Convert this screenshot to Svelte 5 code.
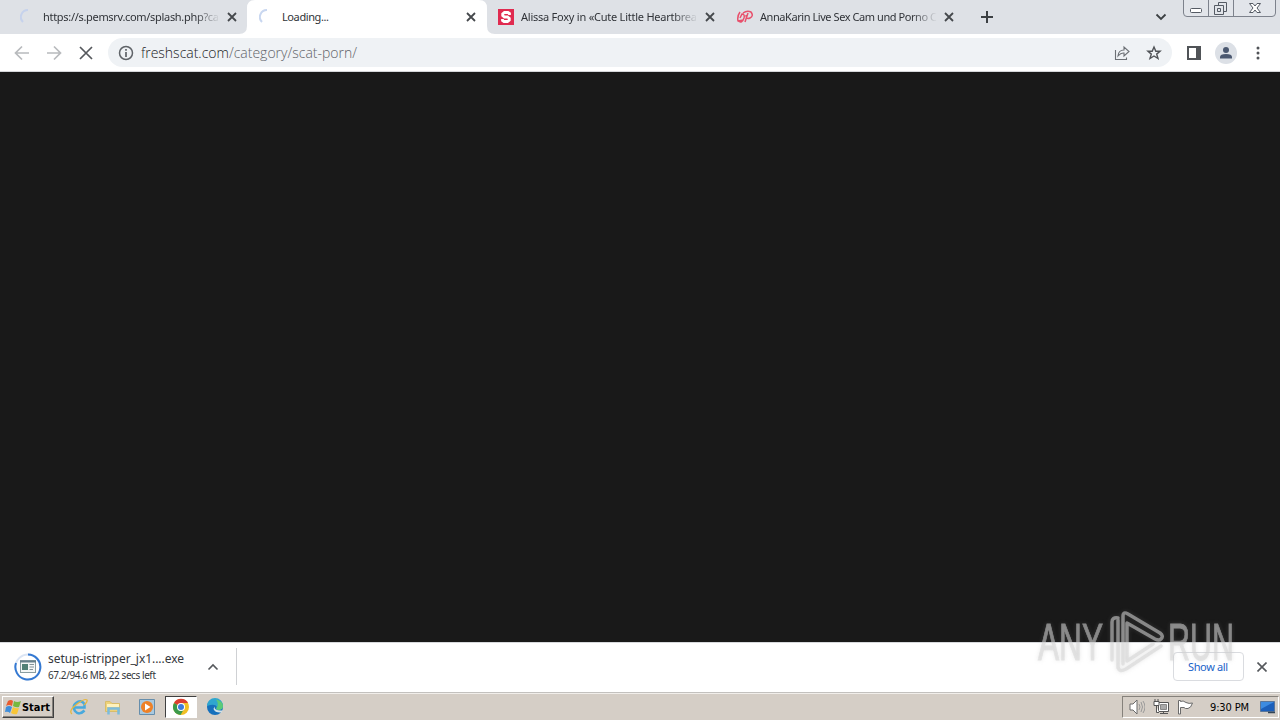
<script>
	const tabs = [
		{ title: "https://s.pemsrv.com/splash.php?ca", width: 176, icon: "spinner" },
		{ title: "Loading...", width: 47, icon: "spinner", active: true },
		{ title: "Alissa Foxy in «Cute Little Heartbrea", width: 176, icon: "strip" },
		{ title: "AnnaKarin Live Sex Cam und Porno C", width: 177, icon: "cam" },
	]
</script>

<div class="screen">
	<div class="tabstrip">
		{#each tabs as tab}
			<div class="tab" class:active={tab.active} class:divided={tab.icon == "strip" || tab.icon == "cam"}>
				{#if tab.active}
					<svg class="curves" width="256" height="34"><path d="M0 34Q8 34 8 26V8Q8 0 16 0H240Q248 0 248 8V26Q248 34 256 34Z" fill="#fff" /></svg>
				{/if}
				<svg class="favicon" width="16" height="16" viewBox="0 0 16 16">
					{#if tab.icon == "spinner"}
						<path d="M8 1A7 7 0 0 0 3 13" fill="none" stroke={tab.active ? "#c9d7f0" : "#c6d2ec"} stroke-width="2" />
					{:else if tab.icon == "strip"}
						<rect width="16" height="16" fill="#e02b50" />
						<path d="M11.500 6V4.500L10 3.500H6.500L4.700 5V6.500L6.500 8H9.500L11.300 9.500V11L9.500 12.500H6L4.500 11.500V10" fill="none" stroke="#fff" stroke-width="2.800" />
					{:else}
						<path d="M3 3Q0 7 1 12Q5 15 7 9Q8 5 5 5L3 9M6 4Q10 1 14 3Q17 7 13 9Q9 11 9 6M11 4L8 13M1 12L6 11" fill="none" stroke="#e8506c" stroke-width="1.500" />
					{/if}
				</svg>
				<svg class="title" width="178" height="20">
					<text x="0" y="14" textLength={tab.width}>{tab.title}</text>
				</svg>
				<svg class="close" width="10" height="10" viewBox="0 0 10 10"><path d="M1 1L9 9M9 1L1 9" fill="none" stroke="#45484c" stroke-width="1.800" /></svg>
			</div>
		{/each}
		<svg class="plus" width="12" height="12"><path d="M6 0V12M0 6H12" stroke="#3c4043" stroke-width="2" /></svg>
		<svg class="search" width="12" height="8"><path d="M1.500 1.500L6 6L10.500 1.500" fill="none" stroke="#3c4043" stroke-width="1.800" /></svg>
		<svg class="window" width="94" height="18" viewBox="0 0 94 18">
			<path d="M.5 0V13Q.5 16.500 4 16.500H89Q92.500 16.500 92.500 13V0M25.500 0V16M50.500 0V16" fill="#e2e5ea" stroke="#7d828c" />
			<g fill="none" stroke="#555b64">
				<rect x="7.500" y="8.500" width="11" height="4" rx="1" fill="#fff" />
				<path d="M35.500 5V2.500H43.500V11.500H40.500M31.500 5.500H40.500V14.500H31.500ZM34.500 8.500H37.500V11.500H34.500Z" />
				<path d="M66.500 3.500H70L72 6L74 3.500H77.500L74 8L77.500 12.500H74L72 10L70 12.500H66.500L70 8Z" fill="#fff" />
			</g>
		</svg>
	</div>

	<div class="toolbar">
		<svg class="nav" width="96" height="20" viewBox="0 0 96 20" fill="none" stroke="#b8babd" stroke-width="1.700">
			<path d="M15 10H2M8 3.500L1.500 10L8 16.500M33 10H46M40 3.500L46.500 10L40 16.500" />
			<path d="M66 4L78 16M78 4L66 16" stroke="#55585c" />
		</svg>
		<div class="address">
			<svg width="16" height="16" viewBox="0 0 16 16"><circle cx="8" cy="8" r="6.500" fill="none" stroke="#5f6368" stroke-width="1.500" /><path d="M8 7V12M8 4V5.700" stroke="#5f6368" stroke-width="1.700" /></svg>
			<svg class="url" width="230" height="24"><text x="0" y="17" textLength="216"><tspan fill="#202124">freshscat.com</tspan>/category/scat-porn/</text></svg>
			<svg class="share" width="16" height="16" viewBox="0 0 16 16"><path d="M1.500 5V14.500H12.500V12.500M4 11Q4.500 5 10 5V2L15 6.500L10 11V8Q7 7.500 4 11Z" fill="none" stroke="#6c7075" stroke-width="1.100" /></svg>
			<svg class="star" width="16" height="16" viewBox="0 0 16 16"><path d="M8 2L9.800 6.300H14L10.700 9.100L12 13.500L8 11L4 13.500L5.300 9.100L2 6.300H6.200Z" fill="none" stroke="#505357" stroke-width="1.400" /></svg>
		</div>
		<svg class="panel" width="14" height="14"><path d="M1 1H13V13H1Z" fill="none" stroke="#505357" stroke-width="2" /><path d="M9 1H14V13H9Z" fill="#505357" /></svg>
		<svg class="profile" width="22" height="22"><circle cx="11" cy="11" r="11" fill="#dce0e6" /><circle cx="11" cy="8" r="3" fill="#4b5870" /><path d="M5 16.500V15Q5 12 11 12Q17 12 17 15V16.500Z" fill="#4b5870" /></svg>
		<svg class="more" width="4" height="14" fill="#505357"><circle cx="2" cy="2" r="1.500" /><circle cx="2" cy="7" r="1.500" /><circle cx="2" cy="12" r="1.500" /></svg>
	</div>

	<div class="page"></div>

	<div class="shelf">
		<div class="download">
			<svg width="28" height="28" viewBox="0 0 28 28">
				<circle cx="14" cy="14" r="12.500" fill="none" stroke="#dbe5f4" stroke-width="2" />
				<path d="M14 1.500A12.500 12.500 0 1 1 2 10" fill="none" stroke="#3479d2" stroke-width="2" />
				<rect x="6.500" y="7.500" width="15" height="12" fill="#f4f7f6" stroke="#8a9ea2" />
				<path d="M6 8.500H22" stroke="#66808a" stroke-width="2" />
				<path d="M8 11H14V17H8Z" fill="#518176" />
				<path d="M15.500 11.500H20M15.500 14H20M15.500 16.500H19" stroke="#849499" />
			</svg>
			<svg class="file" width="150" height="36">
				<text x="0" y="14" textLength="136" class="name">setup-istripper_jx1....exe</text>
				<text x="0" y="30" textLength="108" class="left">67.2/94.6 MB, 22 secs left</text>
			</svg>
			<svg class="caret" width="12" height="8"><path d="M1.500 6.500L6 2L10.500 6.500" fill="none" stroke="#55585c" stroke-width="1.600" /></svg>
		</div>
		<button><svg width="40" height="16"><text x="0" y="12" textLength="40">Show all</text></svg></button>
		<svg class="dismiss" width="10" height="10"><path d="M.5 .5L9.500 9.500M9.500 .5L.5 9.500" stroke="#55585c" stroke-width="1.600" /></svg>
	</div>

	<div class="taskbar">
		<div class="start">
			<svg width="16" height="16" viewBox="0 0 16 16"><path d="M3 2Q6 0 8 2L7 7Q4 5 1 7Z" fill="#e95c2f" /><path d="M9 2Q12 4 16 2L14 8Q11 9 8 7Z" fill="#76b83f" /><path d="M1 8Q4 6 7 8L5 14Q3 12 0 13Z" fill="#3f8edb" /><path d="M8 8Q11 10 14 9L12 15Q9 16 6 14Z" fill="#f8c638" /></svg>
			<svg width="31" height="16"><text x="0" y="12" textLength="28" lengthAdjust="spacingAndGlyphs">Start</text></svg>
		</div>
		<div class="pins">
			<svg width="18" height="18" viewBox="0 0 18 18"><path d="M14.500 12.500Q9 18 5 13Q2 8 6 5Q11 1 14.500 6V9.500H5" fill="none" stroke="#48a9dd" stroke-width="2.500" /><path d="M2 16Q-2 13 7 6Q15 0 17 2Q18 4 14 7" fill="none" stroke="#e6b73f" stroke-width="1.300" /></svg>
			<svg width="18" height="18" viewBox="0 0 18 18"><path d="M1.500 3.500H6L8 5.500H15.500V13.500H1.500Z" fill="#eed27a" stroke="#d9bd6a" /><path d="M3 6H15V9H3Z" fill="#fff2bc" /><path d="M4.500 16.500V10.500H14.500V16.500" fill="none" stroke="#7cbcdd" stroke-width="2.500" /></svg>
			<svg width="18" height="18" viewBox="0 0 18 18"><path d="M1.500 1.500H16.500V16.500H1.500Z" fill="#a9c9df" stroke="#668eac" /><circle cx="9" cy="9" r="6" fill="#ee8127" /><path d="M7 5.500L12.500 9L7 12.500Z" fill="#fff" /></svg>
			<div class="current">
				<svg width="18" height="18" viewBox="0 0 18 18"><circle cx="9" cy="9" r="8" fill="#f1bf24" /><path d="M9 9L2 5A8 8 0 0 1 16 5H9Z" fill="#dc3e31" /><path d="M9 9L2 5A8 8 0 0 0 8.500 17L12 11Z" fill="#3c9a4b" /><circle cx="9" cy="9" r="4" fill="#fff" /><circle cx="9" cy="9" r="3" fill="#3d7bdc" /></svg>
			</div>
			<svg width="18" height="18" viewBox="0 0 18 18"><circle cx="9" cy="9" r="8" fill="#1670bc" /><path d="M1 8A8 8 0 0 1 17 8Q17 12 12 12Q9 11 11 9Q9 5 1 8Z" fill="#2fa6cf" /><path d="M10 1.500Q17 3 17 8Q17 12 12 12Q9 11 11 9Q13 6 10 1.500Z" fill="#5bca78" /><path d="M8.500 8.500Q8 13 16.500 12.500L15.500 14.500Q9 15 7.500 11Z" fill="#d5e4e8" /></svg>
		</div>
		<div class="tray">
			<svg width="16" height="16" viewBox="0 0 16 16" fill="none" stroke="#6a6a6a"><path d="M1 5H4L8 1V15L4 11H1Z" fill="#fff" /><path d="M10 5Q12 8 10 11M12 3Q15 8 12 13M14 2Q18 8 14 14" stroke="#999" /></svg>
			<svg width="16" height="16" viewBox="0 0 16 16" fill="#fff" stroke="#555"><path d="M5.500 3.500H15.500V12.500H5.500Z" /><path d="M7.500 5.500H13.500V10.500H7.500Z" fill="#aaa" stroke="#888" /><path d="M1 2.500H6V6.500H1ZM2 0V2M5 0V2M3.500 7V13.500H6M7 14.500H15M10.500 13V15" /></svg>
			<svg width="16" height="16" viewBox="0 0 16 16"><path d="M1.500 15V1.500H3.500V2.500Q6 1 9 3.500Q12 5 15.500 4Q14 9 11 9.500Q8 10 7 8.500H3.500V15Z" fill="#fff" stroke="#6a6a6a" /></svg>
			<svg class="clock" width="40" height="16"><text x="0" y="12" textLength="39">9:30 PM</text></svg>
			<svg width="17" height="16" viewBox="0 0 17 16"><path d="M.5 2.500H14.500V12.500H.5Z" fill="#1c5fba" stroke="#5b7699" /><path d="M1 3H14L1 10Z" fill="#3d8be0" /><path d="M8 13.500H15" stroke="#345" stroke-width="1.500" /></svg>
		</div>
	</div>

	<svg class="watermark" width="210" height="72" viewBox="0 0 210 72">
		<g opacity=".56" fill="#d5d5d5" stroke="#d5d5d5">
			<text x="4" y="51.500" textLength="65" lengthAdjust="spacingAndGlyphs">ANY</text>
			<text x="134" y="51.500" textLength="66" lengthAdjust="spacingAndGlyphs">RUN</text>
			<path d="M78 52V14Q78 9 84 10M84 50V60M89 56V8Q89 3 94 6L126 25Q130 28 127 31Q125 33 121 31L93 15V53L119 36M84 50V12M84 59Q85 65 92 61L127 38" fill="none" stroke-width="3.500" stroke-linecap="round" stroke-linejoin="round" />
		</g>
	</svg>
</div>

<style>
	:global(body) {
		overflow: hidden;
	}

	.screen {
		position: relative;

		display: flex;
		flex-direction: column;

		width: 1280px;
		height: 720px;

		font-family: "DejaVu Sans Condensed", "DejaVu Sans", sans-serif;
		font-size: 11px;
	}

	svg {
		display: block;
		flex: none;
	}

	.tabstrip {
		display: flex;
		align-items: center;

		height: 34px;

		padding-left: 8px;

		background: #dee1e6;
	}

	.tab {
		position: relative;

		display: flex;
		align-items: center;

		width: 239px;
		height: 34px;

		padding-left: 12px;

		box-sizing: border-box;
	}

	.curves {
		position: absolute;
		left: -8px;
		top: 0;
	}

	.favicon, .title, .close {
		position: relative;
	}

	.title {
		margin-left: 7px;

		font-family: "Noto Sans", sans-serif;
		font-size: 11px;

		fill: #303338;
	}

	.tab:not(.active) .title {
		mask-image: linear-gradient(to right, #000 152px, transparent 177px);
	}

	.close {
		margin-left: 6px;
	}

	.divided::after {
		content: "";

		width: 1px;
		height: 20px;

		margin-left: 10px;

		background: #85898f;
	}

	.plus {
		margin-left: 17px;
	}

	.search {
		margin-left: auto;
	}

	.window {
		align-self: flex-start;

		margin: 0 3px 0 16px;
	}

	.toolbar {
		display: flex;
		align-items: center;

		height: 38px;

		padding: 0 20px 0 14px;

		box-sizing: border-box;

		border-bottom: 1px solid #d4d6d9;

		background: #fff;
	}

	.address {
		display: flex;
		align-items: center;

		width: 1064px;
		height: 29px;

		margin-left: -2px;
		padding: 0 10px;

		box-sizing: border-box;

		border-radius: 15px;

		background: #eff2f5;
	}

	.url {
		margin-left: 7px;

		font-family: "Open Sans", sans-serif;
		font-size: 14px;
		font-weight: 300;

		fill: #5f6368;
	}

	.share {
		margin-left: auto;
	}

	.star {
		margin-left: 16px;
	}

	.panel {
		margin-left: 15px;
	}

	.profile {
		margin-left: 14px;
	}

	.more {
		margin-left: auto;
	}

	.page {
		height: 570px;

		background: #191919;
	}

	.shelf {
		display: flex;
		align-items: center;

		height: 51px;

		padding: 0 13px 2px 0;

		box-sizing: border-box;

		border-top: 1px solid #d7d9dc;
		border-bottom: 1px solid #c3c1be;

		background: #fff;
	}

	.download {
		display: flex;
		align-items: center;

		width: 237px;
		height: 37px;

		padding-left: 14px;

		box-sizing: border-box;

		border-right: 1px solid #cfd1d4;
	}

	.file {
		margin-left: 6px;

		font-family: "Noto Sans", sans-serif;

		fill: #34373b;
	}

	.name {
		font-size: 12px;
	}

	.left {
		font-size: 10px;
	}

	.caret {
		margin-left: 9px;
	}

	button {
		display: flex;
		align-items: center;
		justify-content: center;

		width: 71px;
		height: 29px;

		margin: 0 13px 0 auto;
		padding: 0 2px 0 0;

		box-sizing: border-box;

		border: 1px solid #dadce0;
		border-radius: 4px;

		background: #fff;

		font-family: "Noto Sans", sans-serif;
		font-size: 11px;
	}

	button text {
		fill: #1a63c8;
	}

	.taskbar {
		display: flex;
		align-items: center;

		height: 27px;

		padding: 0 1px 0 2px;

		box-sizing: border-box;

		border-top: 1px solid #f1eeea;

		background: #d5cec6;
	}

	.start {
		display: flex;
		align-items: center;
		gap: 1px;

		width: 52px;
		height: 22px;

		padding-left: 2px;

		box-sizing: border-box;

		border: 1px solid;
		border-color: #fff #404040 #404040 #fff;

		box-shadow: inset -1px -1px #85817b;

		font-weight: 700;
	}

	.pins {
		display: flex;
		align-items: center;
		gap: 16px;

		margin-left: 16px;
	}

	.current {
		display: flex;
		align-items: center;
		justify-content: center;

		width: 32px;
		height: 22px;

		margin: 0 -7px;

		box-sizing: border-box;

		border: 1px solid;
		border-color: #404040 #fff #fff #404040;

		background: #fff;
	}

	.tray {
		display: flex;
		align-items: center;
		gap: 8px;

		width: 157px;
		height: 22px;

		margin-left: auto;
		padding-left: 6px;

		box-sizing: border-box;

		border: 1px solid;
		border-color: #85817b #fff #fff #85817b;
	}

	.clock {
		margin: 0 2px 0 9px;
	}

	.watermark {
		position: absolute;
		left: 1034px;
		top: 608px;

		font-family: "Liberation Sans", sans-serif;
		font-size: 51px;

		filter: drop-shadow(0 0 2px #9996);
	}
</style>
